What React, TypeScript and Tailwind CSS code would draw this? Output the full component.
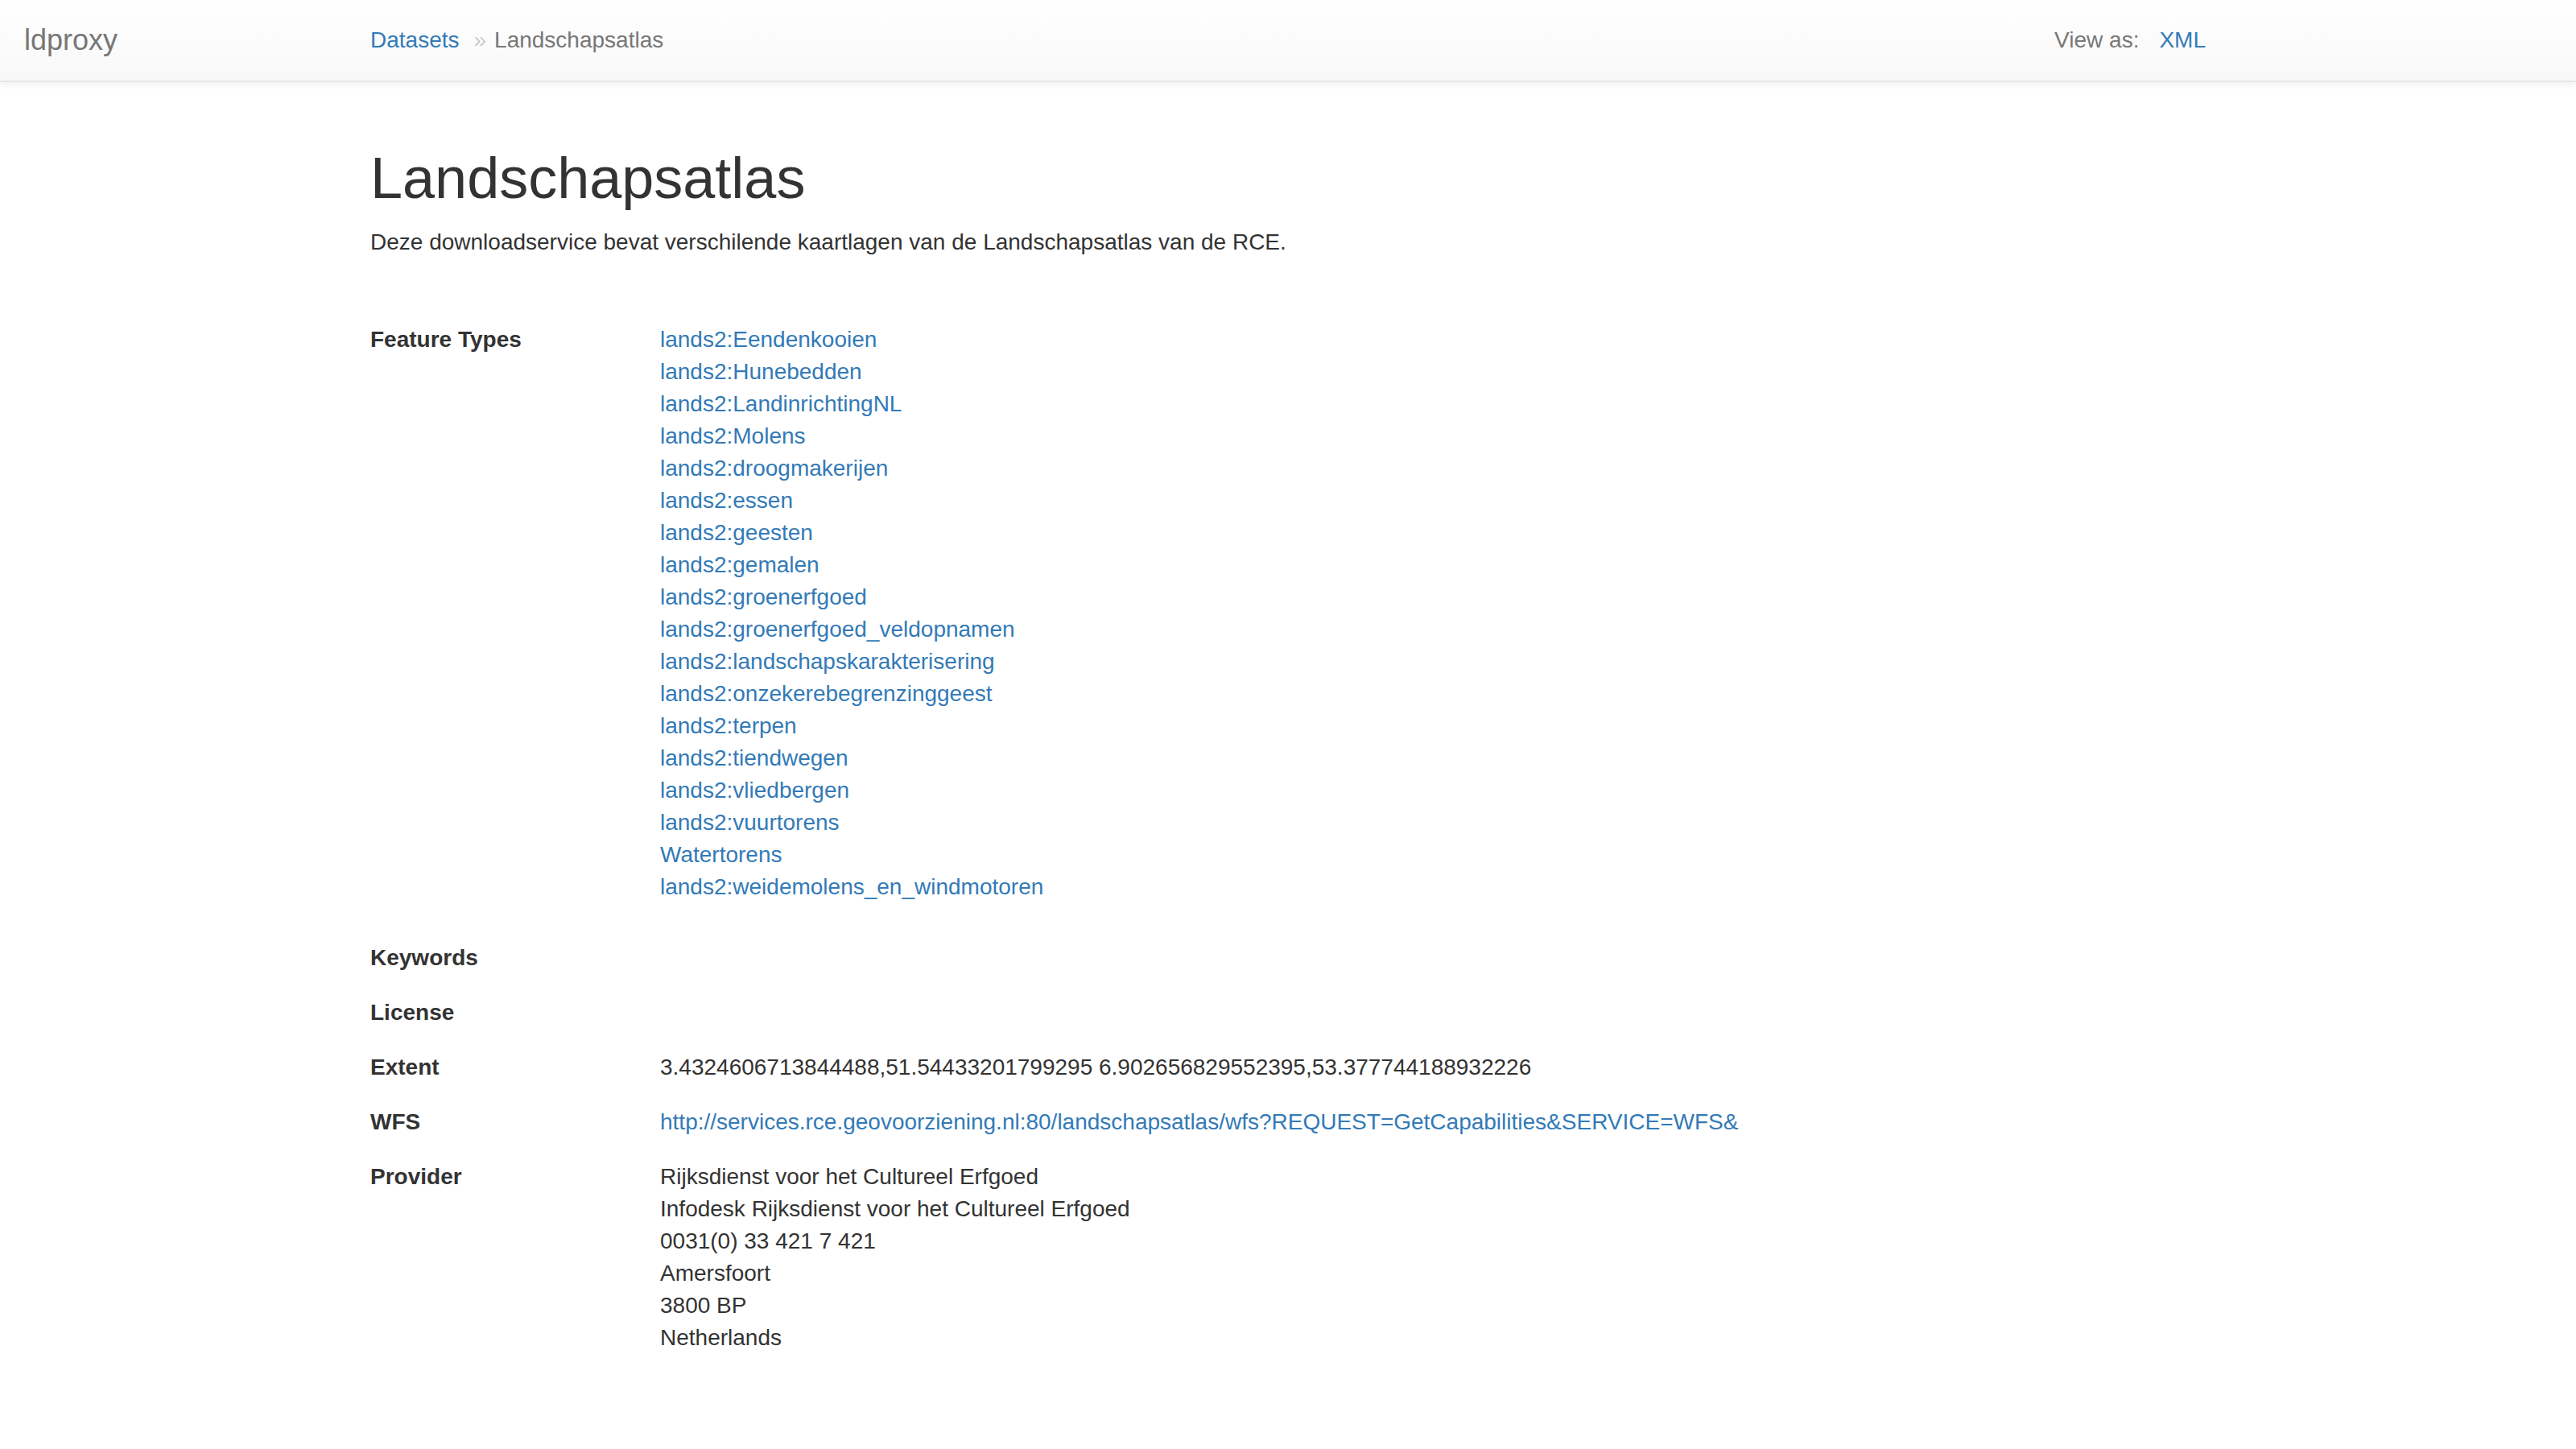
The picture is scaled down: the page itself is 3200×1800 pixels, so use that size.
import * as React from "react"

const featureTypes = [
  "lands2:Eendenkooien",
  "lands2:Hunebedden",
  "lands2:LandinrichtingNL",
  "lands2:Molens",
  "lands2:droogmakerijen",
  "lands2:essen",
  "lands2:geesten",
  "lands2:gemalen",
  "lands2:groenerfgoed",
  "lands2:groenerfgoed_veldopnamen",
  "lands2:landschapskarakterisering",
  "lands2:onzekerebegrenzinggeest",
  "lands2:terpen",
  "lands2:tiendwegen",
  "lands2:vliedbergen",
  "lands2:vuurtorens",
  "Watertorens",
  "lands2:weidemolens_en_windmotoren",
]

const provider = [
  "Rijksdienst voor het Cultureel Erfgoed",
  "Infodesk Rijksdienst voor het Cultureel Erfgoed",
  "0031(0) 33 421 7 421",
  "Amersfoort",
  "3800 BP",
  "Netherlands",
]

function Row({ label, children, className = "" }: { label: string; children?: React.ReactNode; className?: string }) {
  return (
    <div className={"flex " + className}>
      <dt className="w-[360px] shrink-0 font-bold text-[#333]">{label}</dt>
      <dd className="min-h-[40px]">{children}</dd>
    </div>
  )
}

export default function App() {
  return (
    <div className="min-h-screen bg-white font-['Liberation_Sans',Arial,sans-serif] text-[28px] leading-[40px] text-[#333]">
      <nav className="flex h-[102px] border-b-2 border-[#e7e7e7] bg-gradient-to-b from-white to-[#f8f8f8] shadow-[0_2px_10px_rgba(0,0,0,0.075)]">
        <div className="flex w-[460px] shrink-0 items-center pl-[30px]">
          <a className="text-[36px] leading-[40px] text-[#777]">ldproxy</a>
        </div>
        <div className="flex w-[2280px] shrink-0 items-center justify-between">
          <ol className="flex items-center">
            <li>
              <a className="text-[#337ab7]">Datasets</a>
            </li>
            <li className="flex text-[#777]">
              <span className="pl-[18px] pr-[10px] text-[#ccc]">»</span>
              <span>Landschapsatlas</span>
            </li>
          </ol>
          <div className="flex items-center text-[#777]">
            <span>View as:</span>
            <a className="ml-[25px] text-[#337ab7]">XML</a>
          </div>
        </div>
      </nav>

      <main className="mx-auto w-[2280px] pt-[80px] pb-[120px]">
        <h1 className="text-[72px] leading-[79px] font-normal text-[#333]">Landschapsatlas</h1>
        <p className="mt-[20px]">Deze downloadservice bevat verschilende kaartlagen van de Landschapsatlas van de RCE.</p>

        <dl className="mt-[81px]">
          <Row label="Feature Types" className="mb-[48px]">
            <ul>
              {featureTypes.map((f) => (
                <li key={f}>
                  <a className="text-[#337ab7]">{f}</a>
                </li>
              ))}
            </ul>
          </Row>
          <Row label="Keywords" className="mb-[28px]" />
          <Row label="License" className="mb-[28px]" />
          <Row label="Extent" className="mb-[28px]">
            3.4324606713844488,51.54433201799295 6.902656829552395,53.377744188932226
          </Row>
          <Row label="WFS" className="mb-[28px]">
            <a className="text-[#337ab7]">
              http://services.rce.geovoorziening.nl:80/landschapsatlas/wfs?REQUEST=GetCapabilities&amp;SERVICE=WFS&amp;
            </a>
          </Row>
          <Row label="Provider">
            {provider.map((p) => (
              <div key={p}>{p}</div>
            ))}
          </Row>
        </dl>
      </main>
    </div>
  )
}
